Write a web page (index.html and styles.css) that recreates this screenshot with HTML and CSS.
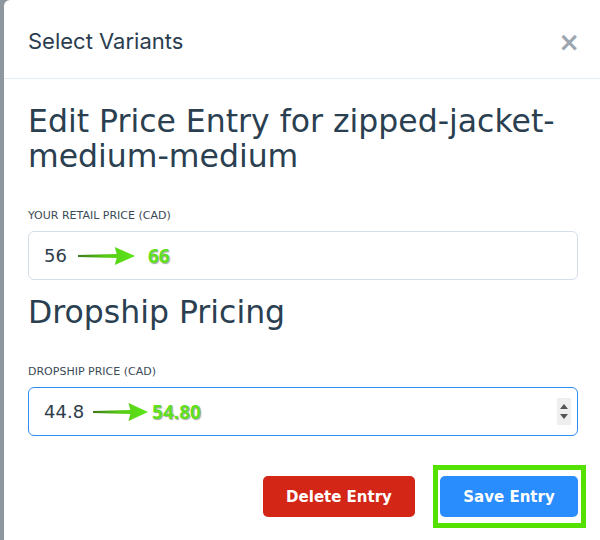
FILE: index.html
```html
<!DOCTYPE html>
<html lang="en">
    <head>
        <meta charset="UTF-8">
        <meta name="viewport" content="width=device-width, initial-scale=1.0">
        <title>Select Variants</title>
        <link rel="stylesheet" href="styles.css">
    </head>
    <body>
        <div class="backdrop">
            <div class="modal">
                <div class="modal-header">
                    <h3 class="modal-title">Select Variants</h3>
                    <span class="close">&times;</span>
                </div>
                <div class="modal-body">
                    <h2 class="section-title">Edit Price Entry for zipped-jacket-medium-medium</h2>

                    <label class="field-label">Your Retail Price (CAD)</label>
                    <div class="field">
                        <span class="old-value">56</span>
                        <svg class="arrow" width="58" height="20" viewBox="0 0 60 20" preserveAspectRatio="none">
                            <defs>
                                <linearGradient id="g1" x1="0" x2="1" y1="0" y2="0">
                                    <stop offset="0" stop-color="#3f7a1c"/>
                                    <stop offset="0.5" stop-color="#56cc14"/>
                                    <stop offset="1" stop-color="#5ee61a"/>
                                </linearGradient>
                            </defs>
                            <path d="M0 9 L40 8 L38 1 L59 10 L38 19 L40 12 L0 11 Z" fill="url(#g1)"/>
                        </svg>
                        <span class="new-value">66</span>
                    </div>

                    <h2 class="section-title second">Dropship Pricing</h2>

                    <label class="field-label">Dropship Price (CAD)</label>
                    <div class="field focused">
                        <span class="old-value">44.8</span>
                        <svg class="arrow arrow-tight" width="56" height="20" viewBox="0 0 60 20" preserveAspectRatio="none">
                            <defs>
                                <linearGradient id="g2" x1="0" x2="1" y1="0" y2="0">
                                    <stop offset="0" stop-color="#3f7a1c"/>
                                    <stop offset="0.5" stop-color="#56cc14"/>
                                    <stop offset="1" stop-color="#5ee61a"/>
                                </linearGradient>
                            </defs>
                            <path d="M0 9 L40 8 L38 1 L59 10 L38 19 L40 12 L0 11 Z" fill="url(#g2)"/>
                        </svg>
                        <span class="new-value">54.80</span>
                        <span class="spinner">
                            <span class="spin-up"></span>
                            <span class="spin-down"></span>
                        </span>
                    </div>
                </div>
                <div class="modal-footer">
                    <button class="btn btn-delete" type="button">Delete Entry</button>
                    <div class="highlight">
                        <button class="btn btn-save" type="button">Save Entry</button>
                    </div>
                </div>
            </div>
        </div>
    </body>
</html>
```

FILE: styles.css
```css
*{
    margin: 0;
    padding: 0;
    box-sizing: border-box;
}
body{
    width: 600px;
    height: 540px;
    overflow: hidden;
    background-color: #8e979e;
    font-family: "DejaVu Sans", sans-serif;
}
.backdrop{
    padding-left: 4px;
}
.modal{
    width: 610px;
    height: 560px;
    background-color: #ffffff;
    border-radius: 6px 0 0 0;
}
.modal-header{
    height: 79px;
    display: flex;
    align-items: center;
    justify-content: space-between;
    padding: 4px 34px 0 24px;
    border-bottom: 1px solid #e4ebf2;
}
.modal-title{
    font-family: "Inter", sans-serif;
    font-weight: 400;
    font-size: 22px;
    color: #2b3d4f;
}
.close{
    font-family: "DejaVu Sans", sans-serif;
    font-weight: bold;
    font-size: 26px;
    color: #9ca6b1;
    margin-top: 2px;
}
.modal-body{
    padding: 25px 36px 0 24px;
}
.section-title{
    font-weight: 400;
    font-size: 31.5px;
    line-height: 35px;
    color: #2a4051;
    padding-right: 10px;
}
.section-title.second{
    margin-top: 15px;
}
.field-label{
    display: block;
    margin-top: 35px;
    font-size: 11px;
    text-transform: uppercase;
    color: #3b4a57;
}
.field{
    margin-top: 9px;
    height: 49px;
    display: flex;
    align-items: center;
    padding: 0 6px 0 15px;
    border: 1px solid #d5dee8;
    border-radius: 6px;
}
.field.focused{
    border: 1.5px solid #2d8df2;
}
.old-value{
    font-size: 18px;
    color: #2e3d4b;
}
.arrow{
    margin: 0 12px 0 11px;
}
.arrow-tight{
    margin: 0 3px 0 9px;
}
.new-value{
    font-family: "Noto Sans", sans-serif;
    font-weight: 700;
    font-size: 19px;
    color: #5ee01e;
    -webkit-text-stroke: 4px #ffffff;
    paint-order: stroke fill;
    text-shadow: 1px 1px 1px rgba(0,0,0,0.35);
}
.spinner{
    margin-left: auto;
    width: 14px;
    height: 27px;
    background-color: #efefef;
    display: flex;
    flex-direction: column;
    align-items: center;
    justify-content: center;
    gap: 5px;
}
.spin-up{
    border-left: 4px solid transparent;
    border-right: 4px solid transparent;
    border-bottom: 5px solid #555;
}
.spin-down{
    border-left: 4px solid transparent;
    border-right: 4px solid transparent;
    border-top: 5px solid #555;
}
.modal-footer{
    display: flex;
    justify-content: flex-end;
    align-items: center;
    gap: 18px;
    padding: 29px 18px 0 0;
    margin-right: 10px;
}
.btn{
    height: 41px;
    border: none;
    border-radius: 5px;
    color: #ffffff;
    font-family: "DejaVu Sans", sans-serif;
    font-weight: bold;
    font-size: 15px;
    cursor: pointer;
}
.btn-delete{
    width: 152px;
    background-color: #d42617;
}
.highlight{
    border: 5px solid #55e100;
    padding: 6px 3px 6px 2px;
}
.btn-save{
    width: 138px;
    background-color: #2a8dfe;
}
```
